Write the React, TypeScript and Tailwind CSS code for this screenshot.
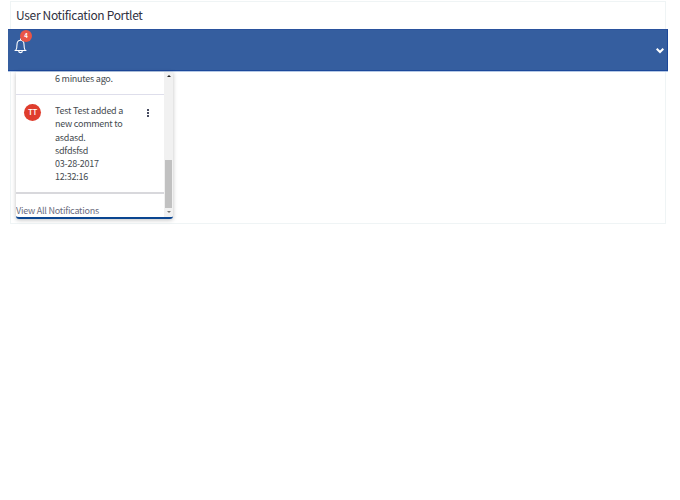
import React from "react";

function Bell() {
  return (
    <svg viewBox="0 0 14 16" className="h-4 w-3.5" fill="none" stroke="#fff" strokeWidth="1.1" strokeLinejoin="round" strokeLinecap="round">
      <path d="M7.500 .8v1.200M2 12.500h11M2.800 12.300c1-1.200 1.200-2 1.200-5.800C4 3.800 5.500 2.300 7.500 2.300s3.500 1.500 3.500 4.200c0 3.800.2 4.600 1.200 5.800M5.700 12.900a1.800 1.700 0 0 0 3.600 0" />
    </svg>
  );
}

function Header() {
  return (
    <header className="-mx-[3px] flex h-[42px] shrink-0 items-start justify-between border-y border-r border-t-[#2a529d] border-r-[#1c489a] border-b-[#1c489a] bg-[#355e9f] shadow-[0_1px_0_#b4c8e6]">
      <div className="relative mt-2 ml-[5px]">
        <Bell />
        <span className="absolute -top-2 left-[7px] flex size-[12px] items-center justify-center rounded-full bg-[#ea5546] text-[6px] leading-none font-bold text-white">4</span>
      </div>
      <svg viewBox="0 0 8 6" className="mt-[18px] mr-[3px] h-1.5 w-2" fill="none" stroke="#fff" strokeWidth="2">
        <path d="M.7 .7 4 4 7.300 .7" />
      </svg>
    </header>
  );
}

const lines = ["Test Test added a", "new comment to", "asdasd.", "sdfdsfsd", "03-28-2017", "12:32:16"];

function Notifications() {
  return (
    <section className="mt-px ml-[5px] flex h-[147px] w-[157px] flex-col overflow-hidden rounded-b-[3px] border-b-2 border-[#0a4590] shadow-[0_1px_4px_rgba(0,0,0,0.25)]">
      <div className="flex min-h-0 flex-1">
        <div className="flex w-[148px] flex-col text-[9px] leading-[13px] tracking-[-0.24px] whitespace-nowrap text-[#454b50]">
          <div className="h-[23px] border-b border-[#dedeeb] pl-[39px]">6 minutes ago.</div>
          <div className="flex h-[100px] border-b-2 border-[#d8d8dc] pt-[9px]">
            <div className="ml-2 flex size-[17px] shrink-0 items-center justify-center rounded-full bg-[#df3d2d] text-[8px] leading-none font-medium tracking-[-0.5px] text-white">TT</div>
            <div className="ml-[14px] w-[92px] pt-[0.400px] leading-[13.200px]">
              {lines.map((line) => <div key={line}>{line}</div>)}
            </div>
            <div className="mt-[5px] flex h-2 flex-col justify-between">
              <i className="size-[2px] bg-[#484c61]" />
              <i className="size-[2px] bg-[#484c61]" />
              <i className="size-[2px] bg-[#484c61]" />
            </div>
          </div>
          <a className="mt-[10px] tracking-[-0.23px] text-[#6b6c7e]">View All Notifications</a>
        </div>
        <div className="flex w-[9px] flex-col items-center bg-[#f1f1f1]">
          <svg viewBox="0 0 4 2" className="mt-[3px] h-0.5 w-1"><path d="M0 2 2 0l2 2z" fill="#222" /></svg>
          <div className="mt-[83px] h-12 w-[7px] bg-[#c1c1c1]" />
          <svg viewBox="0 0 4 2" className="mt-[3px] h-0.5 w-1"><path d="m0 0 2 2 2-2z" fill="#777" /></svg>
        </div>
      </div>
    </section>
  );
}

export default function App() {
  return (
    <div className="h-[500px] w-[680px] overflow-hidden bg-white pt-px pl-[10px] font-['Noto_Sans_CJK_SC',sans-serif]">
      <main className="flex h-[223px] w-[656px] flex-col border border-[#eff4f5]">
        <h1 className="h-[27px] shrink-0 pl-[5px] text-[12px] leading-[26px] tracking-[-0.33px] text-[#30313f]">User Notification Portlet</h1>
        <Header />
        <Notifications />
      </main>
    </div>
  );
}
